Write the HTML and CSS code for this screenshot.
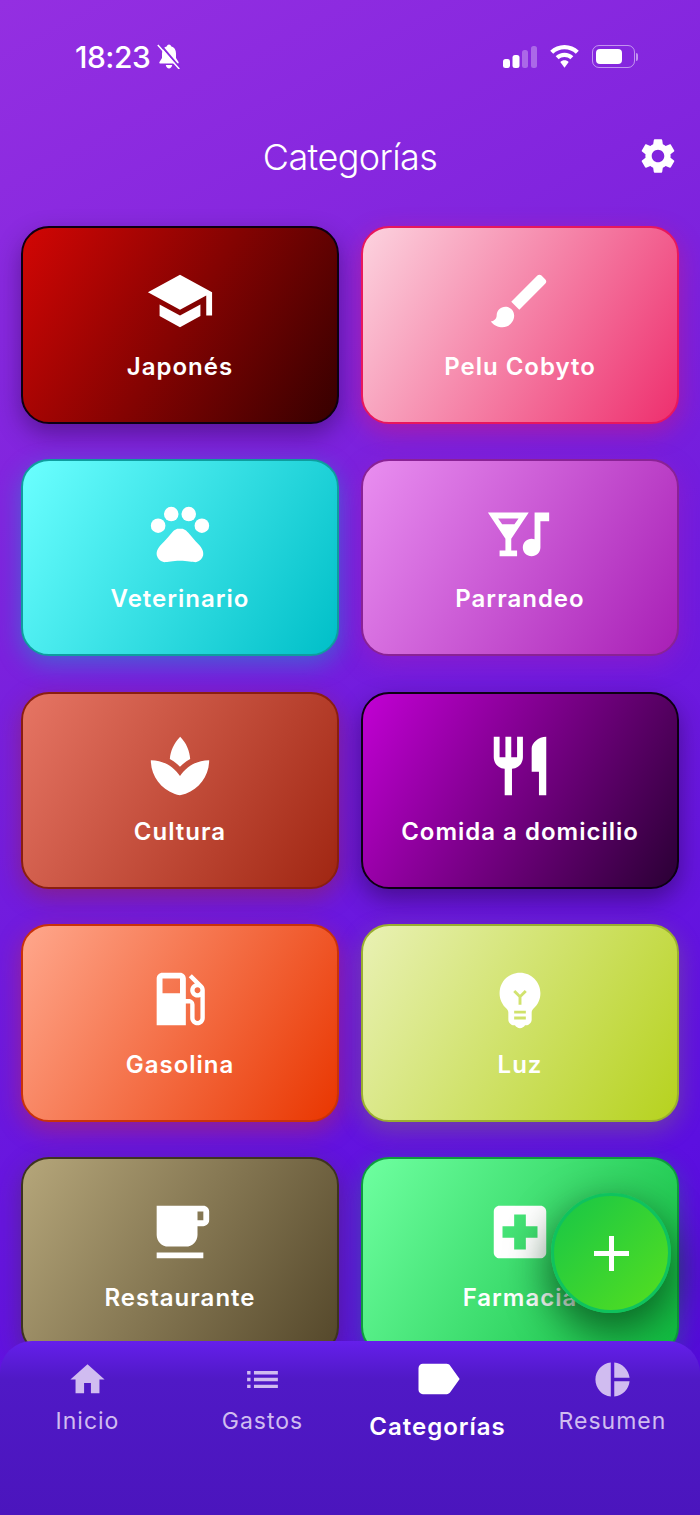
FILE: index.html
```html
<!DOCTYPE html>
<html lang="es">
<head>
<meta charset="utf-8">
<title>Categorías</title>
<link rel="stylesheet" href="styles.css">
</head>
<body>
<div class="screen">

	<div class="status-bar">
		<div class="status-left">
			<span class="clock">18:23</span>
			<svg class="bell" viewBox="0 0 24 24"><path d="M12 0c-1.100 0-1.900.8-2 1.800C6.700 2.700 5 5.400 5 9v4.500L2.500 17.500c-.5.800 0 1.500.9 1.500h17.200c.9 0 1.400-.7.900-1.500L19 13.500V9c0-3.600-1.700-6.300-5-7.200-.1-1-.9-1.800-2-1.800zM8.800 20.500c.4 2 1.700 3.500 3.200 3.500s2.800-1.500 3.200-3.500z"/><path class="bell-cut" d="M2.500-1l21 25"/><path class="bell-line" d="M.8.500l21.500 24"/></svg>
		</div>
		<div class="status-right">
			<svg class="signal" viewBox="0 0 34 22">
				<rect x="0" y="13" width="7" height="9" rx="2.500"/>
				<rect x="9.500" y="9" width="7" height="13" rx="2.500"/>
				<rect class="dim" x="19" y="4" width="6" height="18" rx="2.500"/>
				<rect class="dim" x="28" y="0" width="6" height="22" rx="2.500"/>
			</svg>
			<svg class="wifi" viewBox="0 0 29 23">
				<path d="M14.500 0C9 0 4 2.100.2 5.700l3 3.100C6.200 6 10.100 4.300 14.500 4.300s8.300 1.700 11.300 4.500l3-3.100C25 2.100 20 0 14.500 0z"/>
				<path d="M14.500 7.700c-3.400 0-6.500 1.300-8.800 3.500l3 3.100c1.500-1.400 3.500-2.300 5.800-2.300s4.300.9 5.800 2.300l3-3.100c-2.300-2.200-5.400-3.500-8.800-3.500z"/>
				<path d="M14.500 15.200c-1.600 0-3.100.6-4.200 1.700l4.200 5.900 4.200-5.900c-1.100-1.100-2.600-1.700-4.200-1.700z"/>
			</svg>
			<div class="battery"><div class="battery-fill"></div></div>
			<div class="battery-nib"></div>
		</div>
	</div>

	<div class="header">
		<h1 class="title">Categorías</h1>
		<svg class="gear" viewBox="0 0 24 24"><path d="M19.140,12.940c0.040-0.300,0.060-0.610,0.060-0.940c0-0.320-0.020-0.640-0.070-0.940l2.030-1.580c0.180-0.140,0.230-0.410,0.120-0.610l-1.920-3.320c-0.120-0.220-0.370-0.290-0.590-0.220l-2.390,0.960c-0.500-0.380-1.030-0.700-1.620-0.940L14.400,2.810c-0.040-0.240-0.240-0.410-0.480-0.410h-3.840c-0.240,0-0.430,0.170-0.470,0.410L9.250,5.350C8.660,5.590,8.120,5.920,7.630,6.290L5.240,5.330c-0.220-0.080-0.470,0-0.590,0.220L2.740,8.870C2.620,9.080,2.660,9.340,2.860,9.480l2.030,1.580C4.840,11.360,4.800,11.690,4.800,12s0.020,0.640,0.070,0.940l-2.030,1.580c-0.180,0.140-0.230,0.410-0.120,0.610l1.920,3.320c0.120,0.220,0.370,0.290,0.590,0.220l2.390-0.960c0.500,0.380,1.030,0.700,1.620,0.940l0.360,2.540c0.050,0.240,0.240,0.410,0.480,0.410h3.840c0.240,0,0.440-0.170,0.470-0.410l0.360-2.540c0.590-0.240,1.130-0.560,1.620-0.940l2.390,0.960c0.220,0.080,0.470,0,0.590-0.220l1.920-3.320c0.120-0.220,0.070-0.470-0.120-0.610L19.140,12.940z M12,15.600c-1.980,0-3.600-1.620-3.600-3.600s1.620-3.600,3.600-3.600s3.600,1.620,3.600,3.600S13.980,15.600,12,15.600z"/></svg>
	</div>

	<div class="grid">
		<div class="card japones">
			<svg class="card-icon" viewBox="0 0 24 24"><path d="M5 13.180v4L12 21l7-3.820v-4L12 17l-7-3.820zM12 3L1 9l11 6 9-4.910V17h2V9L12 3z"/></svg>
			<span class="card-label">Japonés</span>
		</div>
		<div class="card pelu">
			<svg class="card-icon" viewBox="0 0 24 24"><path d="M7 14c-1.660 0-3 1.340-3 3 0 1.310-1.160 2-2 2 .92 1.220 2.490 2 4 2 2.210 0 4-1.790 4-4 0-1.660-1.340-3-3-3zm13.710-9.370l-1.340-1.340c-.39-.39-1.020-.39-1.410 0L9 12.250 11.750 15l8.960-8.960c.39-.39.39-1.020 0-1.410z"/></svg>
			<span class="card-label">Pelu Cobyto</span>
		</div>
		<div class="card veterinario">
			<svg class="card-icon" viewBox="0 0 24 24"><circle cx="4.500" cy="9.500" r="2.500"/><circle cx="9" cy="5.500" r="2.500"/><circle cx="15" cy="5.500" r="2.500"/><circle cx="19.500" cy="9.500" r="2.500"/><path d="M17.340 14.860c-.87-1.020-1.600-1.890-2.480-2.910-.46-.54-1.050-1.080-1.750-1.320-.11-.04-.22-.07-.33-.09-.25-.04-.52-.04-.78-.04s-.53 0-.79.05c-.11.02-.22.05-.33.09-.7.24-1.280.78-1.750 1.320-.87 1.020-1.600 1.890-2.480 2.910-1.310 1.310-2.920 2.760-2.620 4.790.29 1.020 1.020 2.030 2.330 2.320.73.15 3.060-.44 5.540-.44h.18c2.480 0 4.810.58 5.540.44 1.310-.29 2.040-1.310 2.330-2.320.31-2.040-1.300-3.490-2.610-4.800z"/></svg>
			<span class="card-label">Veterinario</span>
		</div>
		<div class="card parrandeo">
			<svg class="card-icon" viewBox="0 0 24 24"><path fill-rule="evenodd" d="M1,5h14l-6,9v4h2v2H5v-2h2v-4L1,5z M10.100,9l1.400-2H4.490l1.400,2H10.100z M17,5h5v3h-3v9l0,0c-0.020,1.660-1.360,3-3.020,3c-1.670,0-3.020-1.350-3.020-3s1.350-3,3.020-3c0.350,0,0.690,0.060,1,0.170L17,5z"/></svg>
			<span class="card-label">Parrandeo</span>
		</div>
		<div class="card cultura">
			<svg class="card-icon" viewBox="0 0 24 24"><path d="M15.490 9.630c-.18-2.790-1.310-5.510-3.430-7.630-2.140 2.140-3.320 4.860-3.550 7.630 1.280.68 2.460 1.560 3.490 2.630 1.030-1.060 2.210-1.940 3.490-2.630zM12 15.450C9.850 12.170 6.180 10 2 10c0 5.320 3.360 9.820 8.030 11.490.63.23 1.290.4 1.970.51.68-.12 1.330-.29 1.970-.51C18.640 19.820 22 15.320 22 10c-4.180 0-7.850 2.170-10 5.450z"/></svg>
			<span class="card-label">Cultura</span>
		</div>
		<div class="card comida">
			<svg class="card-icon" viewBox="0 0 24 24"><path d="M11 9H9V2H7v7H5V2H3v7c0 2.120 1.660 3.840 3.750 3.970V22h2.500v-9.030C11.340 12.840 13 11.120 13 9V2h-2v7zm5-3v8h2.500v8H21V2c-2.760 0-5 2.240-5 4z"/></svg>
			<span class="card-label">Comida a domicilio</span>
		</div>
		<div class="card gasolina">
			<svg class="card-icon" viewBox="0 0 24 24"><path d="M19.770 7.230l.01-.01-3.720-3.720L15 4.560l2.110 2.110c-.94.36-1.610 1.260-1.610 2.330 0 1.380 1.120 2.500 2.500 2.500.36 0 .69-.08 1-.21v7.210c0 .55-.45 1-1 1s-1-.45-1-1V14c0-1.100-.9-2-2-2h-1V5c0-1.100-.9-2-2-2H6c-1.100 0-2 .9-2 2v16h10v-7.500h1.500v5c0 1.380 1.120 2.500 2.500 2.500s2.500-1.120 2.500-2.500V9c0-.69-.28-1.320-.73-1.770zM12 10H6V5h6v5zm6 0c-.55 0-1-.45-1-1s.45-1 1-1 1 .45 1 1-.45 1-1 1z"/></svg>
			<span class="card-label">Gasolina</span>
		</div>
		<div class="card luz">
			<svg class="card-icon" viewBox="0 0 24 24"><path fill-rule="evenodd" d="M12,3c-0.460,0-0.930,0.040-1.400,0.140C7.840,3.670,5.640,5.900,5.120,8.660c-0.480,2.610,0.480,5.010,2.220,6.560C7.770,15.600,8,16.130,8,16.690V19c0,1.100,0.900,2,2,2h0.280c0.350,0.600,0.980,1,1.720,1s1.380-0.400,1.720-1H14c1.100,0,2-0.900,2-2v-2.310c0-0.550,0.220-1.090,0.640-1.460C18.090,13.950,19,12.080,19,10C19,6.130,15.870,3,12,3z M14,19h-4v-1h4V19z M14,17h-4v-1h4V17z M12.500,11.410V14h-1v-2.590L9.670,9.590l0.710-0.710L12,10.500l1.620-1.620l0.710,0.710L12.500,11.410z"/></svg>
			<span class="card-label">Luz</span>
		</div>
		<div class="card restaurante">
			<svg class="card-icon" viewBox="0 0 24 24"><path fill-rule="evenodd" d="M20 3H4v10c0 2.210 1.790 4 4 4h6c2.210 0 4-1.790 4-4v-3h2c1.110 0 2-.9 2-2V5c0-1.110-.89-2-2-2zm0 5h-2V5h2v3zM4 19h16v2H4z"/></svg>
			<span class="card-label">Restaurante</span>
		</div>
		<div class="card farmacia">
			<svg class="card-icon" viewBox="0 0 24 24"><path d="M19 3H5c-1.100 0-1.990.9-1.990 2L3 19c0 1.100.9 2 2 2h14c1.100 0 2-.9 2-2V5c0-1.100-.9-2-2-2zm-1 11h-4v4h-4v-4H6v-4h4V6h4v4h4v4z"/></svg>
			<span class="card-label">Farmacia</span>
		</div>
	</div>

	<div class="fab">
		<svg class="fab-plus" viewBox="0 0 35 35"><path d="M15 0h5v15h15v5H20v15h-5V20H0v-5h15z"/></svg>
	</div>

	<div class="tabbar">
		<div class="tab">
			<svg class="tab-icon" viewBox="0 0 24 24"><path d="M10 20v-6h4v6h5v-8h3L12 3 2 12h3v8z"/></svg>
			<span class="tab-label">Inicio</span>
		</div>
		<div class="tab">
			<svg class="tab-icon" viewBox="0 0 24 24"><path d="M3 13h2v-2H3v2zm0 4h2v-2H3v2zm0-8h2V7H3v2zm4 4h14v-2H7v2zm0 4h14v-2H7v2zM7 7v2h14V7H7z"/></svg>
			<span class="tab-label">Gastos</span>
		</div>
		<div class="tab active">
			<svg class="tab-icon" viewBox="0 0 24 24"><path d="M17.630 5.840C17.270 5.330 16.670 5 16 5L5 5.010C3.900 5.010 3 5.900 3 7v10c0 1.100.9 1.990 2 1.990L16 19c.67 0 1.270-.33 1.630-.84L22 12l-4.370-6.160z"/></svg>
			<span class="tab-label">Categorías</span>
		</div>
		<div class="tab">
			<svg class="tab-icon" viewBox="0 0 24 24"><path d="M11 2v20c-5.070-.5-9-4.790-9-10s3.930-9.500 9-10zm2.030 0v8.990H22c-.47-4.740-4.240-8.520-8.970-8.990zm0 11.010V22c4.740-.47 8.500-4.250 8.970-8.990h-8.970z"/></svg>
			<span class="tab-label">Resumen</span>
		</div>
	</div>

</div>
</body>
</html>
```

FILE: styles.css
```css
body {
	margin: 0;
	font-family: Inter, "Liberation Sans", sans-serif;
	color: #fff;
}

svg {
	display: block;
	fill: #fff;
}

.screen {
	position: relative;
	width: 700px;
	height: 1515px;
	overflow: hidden;
	background: linear-gradient(152deg, #942fe1 0%, #7b21dd 35%, #5c0fe0 80%, #4d08d4 100%);
}

/* status bar */
.status-bar {
	display: flex;
	justify-content: space-between;
	align-items: center;
	height: 113px;
	padding: 0 62px 0 75px;
	box-sizing: border-box;
}

.status-left {
	display: flex;
	align-items: center;
	gap: 7px;
}

.clock {
	font-size: 30px;
	font-weight: 500;
	letter-spacing: -0.5px;
}

.bell {
	width: 24px;
	height: 25px;
}

.bell-cut {
	fill: none;
	stroke: #8a2ae0;
	stroke-width: 2;
}

.bell-line {
	fill: none;
	stroke: #fff;
	stroke-width: 1.5;
}

.status-right {
	display: flex;
	align-items: center;
}

.signal {
	width: 34px;
	height: 22px;
	margin-right: 13px;
}

.signal .dim {
	fill: rgba(255, 255, 255, 0.3);
}

.wifi {
	width: 29px;
	height: 23px;
	margin-right: 13px;
}

.battery {
	width: 43px;
	height: 23px;
	padding: 3px;
	border: 1.5px solid rgba(255, 255, 255, 0.5);
	border-radius: 7px;
	box-sizing: border-box;
}

.battery-fill {
	width: 26px;
	height: 100%;
	background-color: #fff;
	border-radius: 4px;
}

.battery-nib {
	width: 2px;
	height: 8px;
	margin-left: 1px;
	background-color: rgba(255, 255, 255, 0.5);
	border-radius: 0 2px 2px 0;
}

/* header */
.header {
	position: relative;
	display: flex;
	justify-content: center;
	align-items: center;
	height: 88px;
	margin-bottom: 25px;
}

.title {
	margin: 0;
	font-size: 36px;
	font-weight: 300;
	letter-spacing: -0.6px;
}

.gear {
	position: absolute;
	top: 22px;
	right: 21px;
	width: 42px;
	height: 42px;
}

/* cards */
.grid {
	display: grid;
	grid-template-columns: 318px 318px;
	column-gap: 22px;
	row-gap: 35.25px;
	padding-left: 21px;
}

.card {
	display: flex;
	flex-direction: column;
	align-items: center;
	height: 197.5px;
	padding-top: 37.5px;
	box-sizing: border-box;
	border: 2.5px solid;
	border-radius: 28px;
}

.card-icon {
	width: 70px;
	height: 70px;
}

.card-label {
	margin-top: 16px;
	font-size: 24px;
	line-height: 30px;
	font-weight: 600;
	letter-spacing: 1px;
}

.japones {
	border-color: #0d0012;
	background: linear-gradient(122deg, #d20604, #360000);
	box-shadow: 0 10px 24px rgba(30, 0, 50, 0.4);
}

.pelu {
	border-color: #e8175d;
	background: linear-gradient(122deg, #fcd3df, #ee2f6e);
	box-shadow: 0 8px 24px rgba(232, 23, 93, 0.4);
}

.veterinario {
	border-color: #0f9d9f;
	background: linear-gradient(122deg, #6bffff, #00bfc8);
	box-shadow: 0 8px 24px rgba(0, 190, 200, 0.4);
}

.parrandeo {
	border-color: #8a2296;
	background: linear-gradient(122deg, #e98ef0, #a81fb6);
	box-shadow: 0 8px 24px rgba(168, 31, 182, 0.4);
}

.cultura {
	border-color: #8a1f10;
	background: linear-gradient(122deg, #e67564, #a02612);
	box-shadow: 0 8px 24px rgba(160, 38, 18, 0.4);
}

.comida {
	border-color: #0d0012;
	background: linear-gradient(122deg, #c200d4, #2a0034);
	box-shadow: 0 10px 24px rgba(30, 0, 50, 0.45);
}

.gasolina {
	border-color: #c9320a;
	background: linear-gradient(122deg, #ffa78c, #e93600);
	box-shadow: 0 8px 24px rgba(233, 54, 0, 0.35);
}

.luz {
	border-color: #9aae30;
	background: linear-gradient(122deg, #e9f1b4, #b6d21e);
	box-shadow: 0 8px 24px rgba(150, 170, 40, 0.3);
}

.restaurante {
	border-color: #3e3420;
	background: linear-gradient(122deg, #b5a67a, #54472a);
	box-shadow: 0 8px 24px rgba(70, 60, 40, 0.4);
}

.farmacia {
	border-color: #0e9c3e;
	background: linear-gradient(122deg, #6effa0, #0fbd3f);
	box-shadow: 0 8px 24px rgba(15, 189, 63, 0.3);
}

/* floating button */
.fab {
	position: absolute;
	top: 1193px;
	left: 551px;
	display: flex;
	justify-content: center;
	align-items: center;
	width: 120px;
	height: 120px;
	box-sizing: border-box;
	border: 3px solid #0fc25e;
	border-radius: 50%;
	background: linear-gradient(135deg, #17c648, #55df1e);
	box-shadow: 0 16px 40px 4px rgba(0, 50, 15, 0.65);
}

.fab-plus {
	width: 35px;
	height: 35px;
}

/* tab bar */
.tabbar {
	position: absolute;
	left: 0;
	right: 0;
	bottom: 0;
	display: grid;
	grid-template-columns: repeat(4, 1fr);
	height: 174px;
	border-radius: 32px 32px 0 0;
	background: linear-gradient(180deg, #651feb 0, #5019c6 38px, #4b15bd 100%);
}

.tab {
	display: flex;
	flex-direction: column;
	align-items: center;
	padding-top: 18px;
	color: #d0bcf0;
}

.tab svg {
	fill: #d0bcf0;
}

.tab-icon {
	width: 41px;
	height: 41px;
}

.tab-label {
	margin-top: 7px;
	font-size: 23px;
	line-height: 28px;
	letter-spacing: 1px;
}

.tab.active {
	padding-top: 12px;
	color: #fff;
}

.tab.active svg {
	fill: #fff;
	width: 52px;
	height: 52px;
}

.tab.active .tab-label {
	margin-top: 8px;
	font-size: 24px;
	font-weight: 600;
}
```
